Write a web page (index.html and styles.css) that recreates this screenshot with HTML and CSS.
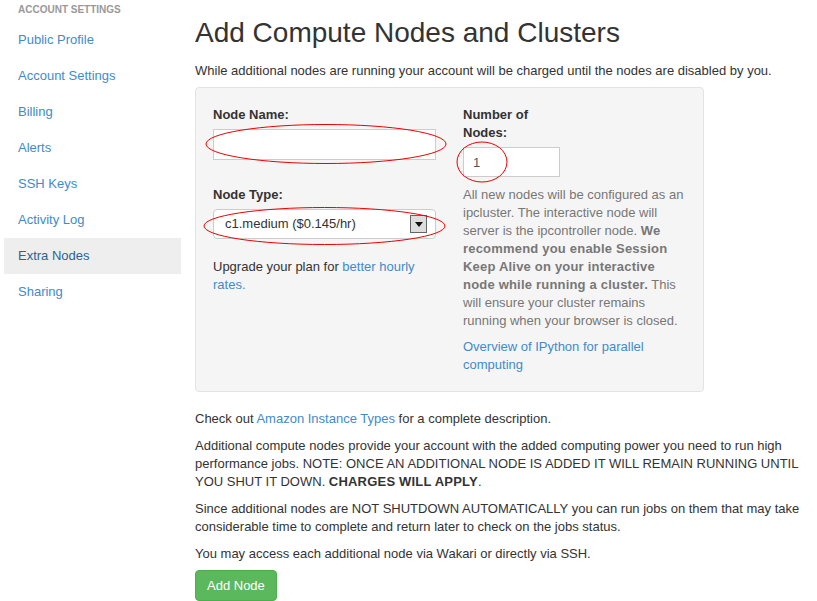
FILE: index.html
```html
<!DOCTYPE html>
<html>
<head>
<meta charset="utf-8">
<link rel="stylesheet" href="styles.css">
</head>
<body>
<div class="page">
  <aside class="sidebar">
    <div class="side-header">ACCOUNT SETTINGS</div>
    <ul class="nav">
      <li><a href="#">Public Profile</a></li>
      <li><a href="#">Account Settings</a></li>
      <li><a href="#">Billing</a></li>
      <li><a href="#">Alerts</a></li>
      <li><a href="#">SSH Keys</a></li>
      <li><a href="#">Activity Log</a></li>
      <li class="active"><a href="#">Extra Nodes</a></li>
      <li><a href="#">Sharing</a></li>
    </ul>
  </aside>
  <main class="main">
    <h1 class="title">Add Compute Nodes and Clusters</h1>
    <p class="lead">While additional nodes are running your account will be charged until the nodes are disabled by you.</p>
    <div class="well">
      <div class="col">
        <label class="label">Node Name:</label>
        <div class="field">
          <input class="text-input" type="text">
          <svg class="mark mark-name" width="242" height="42" viewBox="0 0 242 42"><ellipse cx="121" cy="21" rx="120" ry="19.5" fill="none" stroke="#ee0000" stroke-width="1"/></svg>
        </div>
        <label class="label label-type">Node Type:</label>
        <div class="field">
          <div class="select">
            <span>c1.medium ($0.145/hr)</span>
            <span class="select-btn"><svg width="8" height="5" viewBox="0 0 8 5"><path d="M0 0H8L4 5Z" fill="#111"/></svg></span>
          </div>
          <svg class="mark mark-type" width="243" height="40" viewBox="0 0 243 40"><ellipse cx="121.5" cy="20" rx="120.5" ry="18.5" fill="none" stroke="#ee0000" stroke-width="1"/></svg>
        </div>
        <p class="upgrade">Upgrade your plan for <a href="#">better hourly rates.</a></p>
      </div>
      <div class="col">
        <label class="label label-num">Number of Nodes:</label>
        <div class="field field-num">
          <input class="num-input" type="text" value="1">
          <svg class="mark mark-num" width="52" height="42" viewBox="0 0 52 42"><ellipse cx="26" cy="21" rx="25" ry="20" fill="none" stroke="#ee0000" stroke-width="1"/></svg>
        </div>
        <p class="help">All new nodes will be configured as an ipcluster. The interactive node will server is the ipcontroller node. <b>We recommend you enable Session Keep Alive on your interactive node while running a cluster.</b> This will ensure your cluster remains running when your browser is closed.</p>
        <p class="help"><a href="#">Overview of IPython for parallel computing</a></p>
      </div>
    </div>
    <p class="para para-first">Check out <a href="#">Amazon Instance Types</a> for a complete description.</p>
    <p class="para">Additional compute nodes provide your account with the added computing power you need to run high performance jobs. NOTE: ONCE AN ADDITIONAL NODE IS ADDED IT WILL REMAIN RUNNING UNTIL YOU SHUT IT DOWN. <b>CHARGES WILL APPLY</b>.</p>
    <p class="para">Since additional nodes are NOT SHUTDOWN AUTOMATICALLY you can run jobs on them that may take considerable time to complete and return later to check on the jobs status.</p>
    <p class="para">You may access each additional node via Wakari or directly via SSH.</p>
    <button class="btn">Add Node</button>
  </main>
</div>
</body>
</html>
```

FILE: styles.css
```css
* { box-sizing: border-box; }
html, body { margin: 0; padding: 0; background: #fff; }
body {
  font-family: "Liberation Sans", Arial, sans-serif;
  font-size: 13px;
  line-height: 18px;
  color: #333;
}
a { color: #428bca; text-decoration: none; }
b { letter-spacing: 0.2px; }
.page { display: flex; }
.sidebar { width: 195px; flex: none; padding-left: 4px; }
.side-header {
  font-size: 10px;
  font-weight: bold;
  color: #999;
  line-height: 12px;
  padding: 4px 0 0 14px;
  height: 22px;
}
.nav { list-style: none; margin: 0; padding: 0; width: 177px; }
.nav li a {
  display: block;
  height: 36px;
  line-height: 36px;
  padding-left: 14px;
  font-size: 13px;
}
.nav li.active a { background: #eee; color: #2a6496; }
.main { width: 610px; flex: none; }
.title {
  font-size: 28px;
  font-weight: normal;
  line-height: 33px;
  margin: 16px 0 13px;
  color: #333;
}
.lead { margin: 0 0 7px; }
.well {
  width: 509px;
  background: #f5f5f5;
  border: 1px solid #e3e3e3;
  border-radius: 4px;
  padding: 18px 17px 17px;
  display: flex;
  gap: 27px;
}
.col { width: 223px; flex: none; }
.label { display: block; font-weight: bold; margin-bottom: 5px; }
.label-type { margin-top: 26px; }
.label-num { width: 90px; }
.field { position: relative; }
.text-input {
  display: block;
  width: 223px;
  height: 31px;
  border: 1px solid #ccc;
  background: #fff;
  margin: 0;
  padding: 0 8px;
  font: inherit;
}
.select {
  height: 30px;
  border: 1px solid #ccc;
  border-radius: 4px;
  background: #fff;
  display: flex;
  align-items: center;
  justify-content: space-between;
  padding: 0 8px 0 11px;
  color: #333;
}
.select-btn {
  width: 17px;
  height: 18px;
  border: 1px solid #666;
  background: #ddd;
  display: flex;
  align-items: center;
  justify-content: center;
}
.mark { position: absolute; pointer-events: none; }
.mark-name { left: -8px; top: -6px; }
.mark-type { left: -10px; top: -3px; }
.mark-num { left: -7px; top: -6px; }
.upgrade { margin: 19px 0 0; }
.field-num { width: 97px; }
.num-input {
  display: block;
  width: 97px;
  height: 30px;
  border: 1px solid #ccc;
  background: #fff;
  margin: 0;
  padding: 0 9px;
  font: inherit;
  color: #555;
}
.help { color: #777; margin: 9px 0 0; }
.help + .help { margin-top: 8px; }
.para { margin: 9px 0 0; }
.para-first { margin-top: 18px; }
.btn {
  margin-top: 7px;
  background: #5cb85c;
  border: 1px solid #4cae4c;
  border-radius: 4px;
  color: #fff;
  font: inherit;
  height: 31px;
  padding: 0 11px;
}
```
